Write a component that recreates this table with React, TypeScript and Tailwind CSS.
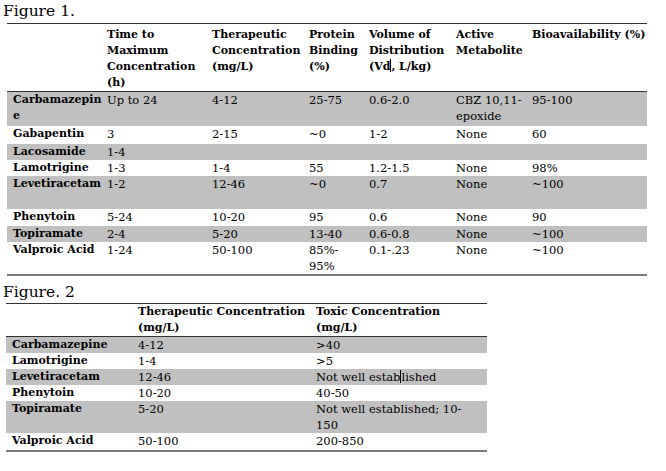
import React from "react";

const FONT = { fontFamily: '"DejaVu Serif", "Liberation Serif", serif' };

function Cursor() {
  return <span className="inline-block w-px h-[13px] bg-black align-[-2px]" />;
}

type Row1 = { name: React.ReactNode; cells: React.ReactNode[]; h: string; grey: boolean };

const rows1: Row1[] = [
  { name: <>Carbamazepin<br />e</>, cells: ["Up to 24", "4-12", "25-75", "0.6-2.0", <>CBZ 10,11-<br />epoxide</>, "95-100"], h: "h-[34px]", grey: true },
  { name: "Gabapentin", cells: ["3", "2-15", "~0", "1-2", "None", "60"], h: "h-[18px]", grey: false },
  { name: "Lacosamide", cells: ["1-4", "", "", "", "", ""], h: "h-[16px]", grey: true },
  { name: "Lamotrigine", cells: ["1-3", "1-4", "55", "1.2-1.5", "None", "98%"], h: "h-[16px]", grey: false },
  { name: "Levetiracetam", cells: ["1-2", "12-46", "~0", "0.7", "None", "~100"], h: "h-[33px]", grey: true },
  { name: "Phenytoin", cells: ["5-24", "10-20", "95", "0.6", "None", "90"], h: "h-[17px]", grey: false },
  { name: "Topiramate", cells: ["2-4", "5-20", "13-40", "0.6-0.8", "None", "~100"], h: "h-[16px]", grey: true },
  { name: "Valproic Acid", cells: ["1-24", "50-100", <>85%-<br />95%</>, "0.1-.23", "None", "~100"], h: "h-[33px]", grey: false },
];

const widths1 = ["w-[94px]", "w-[105px]", "w-[97px]", "w-[60px]", "w-[87px]", "w-[76px]", "w-[121px]"];

const rows2 = [
  { name: "Carbamazepine", a: "4-12", b: ">40", h: "h-[17px]", grey: true },
  { name: "Lamotrigine", a: "1-4", b: ">5", h: "h-[16px]", grey: false },
  { name: "Levetiracetam", a: "12-46", b: <>Not well estab<Cursor />lished</>, h: "h-[16px]", grey: true },
  { name: "Phenytoin", a: "10-20", b: "40-50", h: "h-[16px]", grey: false },
  { name: "Topiramate", a: "5-20", b: <>Not well established; 10-<br />150</>, h: "h-[32px]", grey: true },
  { name: "Valproic Acid", a: "50-100", b: "200-850", h: "h-[18px]", grey: false },
];

export default function App() {
  const cell = "align-top p-0 pl-[6px] whitespace-nowrap text-[11.5px] leading-[16px]";
  const bcell = "align-top p-0 pl-[6px] whitespace-nowrap text-[11px] leading-[16px] font-bold text-left";
  return (
    <div className="w-[666px] h-[471px] bg-white text-black" style={FONT}>
      <div className="h-[23px] pl-[3px] text-[15.5px] leading-[22px]">Figure 1.</div>
      <table className="ml-[7px] table-fixed border-collapse w-[640px]">
        <colgroup>
          {widths1.map((w, i) => (
            <col key={i} className={w} />
          ))}
        </colgroup>
        <thead>
          <tr className="h-[66px] border-t border-b border-[#333]">
            <th className={bcell}></th>
            <th className={bcell + " pt-[3px]"}>Time to<br />Maximum<br />Concentration<br />(h)</th>
            <th className={bcell + " pt-[3px]"}>Therapeutic<br />Concentration<br />(mg/L)</th>
            <th className={bcell + " pt-[3px]"}>Protein<br />Binding<br />(%)</th>
            <th className={bcell + " pt-[3px]"}>Volume of<br />Distribution<br />(Vd<Cursor />, L/kg)</th>
            <th className={bcell + " pt-[3px]"}>Active<br />Metabolite</th>
            <th className={bcell + " pt-[3px]"}>Bioavailability (%)</th>
          </tr>
        </thead>
        <tbody>
          {rows1.map((r, i) => (
            <tr key={i} className={(r.grey ? "bg-[#c0c0c0] " : "") + r.h + (i === rows1.length - 1 ? " border-b-2 border-[#7a7a7a]" : "")}>
              <td className={bcell}>{r.name}</td>
              {r.cells.map((c, j) => (
                <td key={j} className={cell}>{c}</td>
              ))}
            </tr>
          ))}
        </tbody>
      </table>
      <div className="h-[27px] pl-[3px] pt-[5px] text-[15.5px] leading-[22px]">Figure. 2</div>
      <table className="ml-[6px] table-fixed border-collapse w-[481px]">
        <colgroup>
          <col className="w-[126px]" />
          <col className="w-[178px]" />
          <col className="w-[177px]" />
        </colgroup>
        <thead>
          <tr className="h-[33px] border-t border-b border-[#333]">
            <th className={bcell}></th>
            <th className={bcell}>Therapeutic Concentration<br />(mg/L)</th>
            <th className={bcell}>Toxic Concentration<br />(mg/L)</th>
          </tr>
        </thead>
        <tbody>
          {rows2.map((r, i) => (
            <tr key={i} className={(r.grey ? "bg-[#c0c0c0] " : "") + r.h + (i === rows2.length - 1 ? " border-b-2 border-[#7a7a7a]" : "")}>
              <td className={bcell}>{r.name}</td>
              <td className={cell}>{r.a}</td>
              <td className={cell}>{r.b}</td>
            </tr>
          ))}
        </tbody>
      </table>
    </div>
  );
}
